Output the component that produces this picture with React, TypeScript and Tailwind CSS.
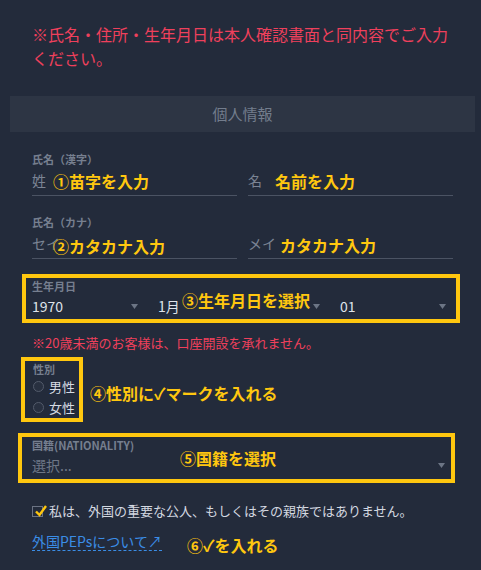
import React from "react";

const NOTE = "text-[16px] font-bold leading-[22px] text-[#ffc70f] whitespace-nowrap";

const Arrow: React.FC = () => (
  <svg width="7" height="5" viewBox="0 0 7 5">
    <path d="M0 0 L7 0 L3.5 5 Z" fill="#6c7585" />
  </svg>
);

interface FieldProps {
  label?: string;
  placeholder: string;
  note: string;
  noteClass: string;
}

const TextField: React.FC<FieldProps> = ({ label, placeholder, note, noteClass }) => {
  return (
    <div>
      <div className="h-[14px] text-[11px] leading-[14px] font-bold text-[#767f8f]">{label}</div>
      <div className="relative flex h-[30px] items-center border-b border-[#4b5363] text-[14px] text-[#7b8494]">
        <span>{placeholder}</span>
        <span className={"absolute " + NOTE + " " + noteClass}>{note}</span>
      </div>
    </div>
  );
};

const Select: React.FC<{ value: string; className: string }> = ({ value, className }) => (
  <div className={"flex h-[26px] items-center justify-between text-[14px] text-[#dfe3ea] " + className}>
    <span>{value}</span>
    <Arrow />
  </div>
);

const Radio: React.FC<{ label: string }> = ({ label }) => (
  <div className="flex h-[21px] items-center gap-[5px]">
    <span className="h-[11px] w-[11px] rounded-full border border-[#535b6b] bg-[#283040]" />
    <span className="text-[13px] text-[#d6dbe3]">{label}</span>
  </div>
);

const App: React.FC = () => {
  return (
    <div className="min-h-[570px] w-[481px] bg-[#232b3b] pb-4 font-['Noto_Sans_CJK_JP',sans-serif]">
      <p className="px-[32px] pt-[22px] text-[16px] leading-[24px] text-[#ef405c]">
        ※氏名・住所・生年月日は本人確認書面と同内容でご入力ください。
      </p>

      <div className="mt-[26px] ml-[10px] mr-[6px] flex h-[36px] items-center justify-center bg-[#2d3544] text-[15px] text-[#737d8d]">
        個人情報
      </div>

      {/* 氏名 */}
      <div className="mt-[20px] ml-[32px] grid grid-cols-[205px_205px] gap-x-[11px] gap-y-[19px]">
        <TextField label="氏名（漢字）" placeholder="姓" note="①苗字を入力" noteClass="left-[21px] top-[4px]" />
        <TextField placeholder="名" note="名前を入力" noteClass="left-[27px] top-[4px]" />
        <TextField label="氏名（カナ）" placeholder="セイ" note="②カタカナ入力" noteClass="left-[21px] top-[6px]" />
        <TextField placeholder="メイ" note="カタカナ入力" noteClass="left-[32px] top-[5px]" />
      </div>

      {/* 生年月日 */}
      <div className="relative mt-[15px] ml-[22px] w-[438px] border-4 border-[#ffc70f] pl-[6px]">
        <div className="mt-[1px] h-[14px] text-[11px] leading-[14px] font-bold text-[#767f8f]">生年月日</div>
        <div className="flex">
          <Select value="1970" className="w-[110px] pr-[4px]" />
          <Select value="1月" className="ml-[16px] w-[166px] pr-[4px]" />
          <Select value="01" className="ml-[16px] w-[108px] pr-[2px]" />
        </div>
        <span className={"absolute left-[156px] top-[11px] " + NOTE}>③生年月日を選択</span>
      </div>

      <p className="mt-[11px] ml-[32px] text-[13px] leading-[18px] text-[#ef405c]">
        ※20歳未満のお客様は、口座開設を承れません。
      </p>

      {/* 性別 */}
      <div className="mt-[5px] ml-[21px] flex items-center">
        <div className="w-[62px] border-4 border-[#ffc70f] pl-[8px] pt-[2px]">
          <div className="h-[13px] text-[11px] leading-[13px] font-bold text-[#767f8f]">性別</div>
          <Radio label="男性" />
          <Radio label="女性" />
        </div>
        <span className={"ml-[7px] mt-[7px] " + NOTE}>④性別に✓マークを入れる</span>
      </div>

      {/* 国籍 */}
      <div className="relative mt-[11px] ml-[18px] w-[437px] border-4 border-[#ffc70f] pl-[10px] pr-[6px] pb-[1px]">
        <div className="mt-[1px] h-[14px] text-[11px] leading-[14px] font-bold text-[#767f8f]">国籍(NATIONALITY)</div>
        <div className="flex h-[26px] items-center justify-between text-[14px] text-[#6e7787]">
          <span>選択...</span>
          <Arrow />
        </div>
        <span className={"absolute left-[158px] top-[10px] " + NOTE}>⑤国籍を選択</span>
      </div>

      {/* PEPs */}
      <div className="mt-[20px] ml-[32px] flex h-[16px] items-center gap-[6px]">
        <span className="relative h-[11px] w-[11px] border border-[#6b7383]">
          <svg className="absolute left-[2px] top-[-2px]" width="12" height="12" viewBox="0 0 12 12">
            <path d="M1 6.5 L4.5 10 L11 1" fill="none" stroke="#ffc70f" strokeWidth="2.4" />
          </svg>
        </span>
        <span className="text-[13px] text-[#d3d8e0]">私は、外国の重要な公人、もしくはその親族ではありません。</span>
      </div>

      <div className="mt-[9px] ml-[32px] flex items-center">
        <a className="border-b border-dashed border-[#3b8de6] text-[14px] leading-[17px] text-[#3b8de6]">
          外国PEPsについて↗
        </a>
        <span className={"ml-[25px] mt-[6px] " + NOTE}>⑥✓を入れる</span>
      </div>
    </div>
  );
};

export default App;
